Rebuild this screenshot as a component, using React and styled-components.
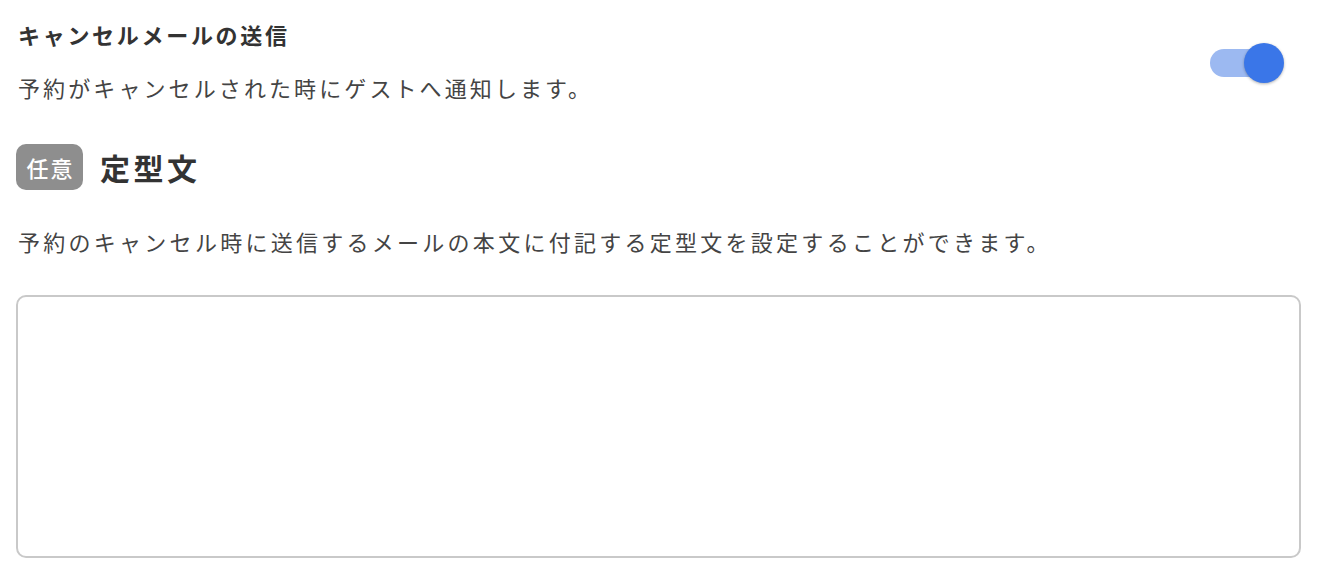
import React from "react";
import styled, { createGlobalStyle } from "styled-components";

const Global = createGlobalStyle`
  html, body { margin: 0; padding: 0; background: #fff; }
  body { font-family: "Noto Sans CJK JP", "Noto Sans", sans-serif; color: #333; }
  * { box-sizing: border-box; }
`;

const Page = styled.div`
  padding: 18px 23px 0 16px;
  display: flex;
  flex-direction: column;
`;

const HeaderRow = styled.div`
  display: flex;
  justify-content: space-between;
  align-items: center;
  padding-left: 2px;
`;

const HeaderText = styled.div`
  display: flex;
  flex-direction: column;
  gap: 19px;
`;

const Title = styled.div`
  font-size: 22px;
  font-weight: 700;
  letter-spacing: 2.7px;
  line-height: 32px;
  color: #333;
`;

const Desc = styled.div`
  font-size: 22px;
  letter-spacing: 3.1px;
  line-height: 36px;
  color: #444;
`;

const Toggle = styled.div`
  position: relative;
  width: 74px;
  height: 40px;
  margin-right: 17px;
  margin-top: 2px;
`;

const Track = styled.div`
  position: absolute;
  left: 0;
  top: 6px;
  width: 56px;
  height: 28px;
  border-radius: 14px;
  background: #9cb9f1;
`;

const Knob = styled.div`
  position: absolute;
  right: 0;
  top: 0;
  width: 40px;
  height: 40px;
  border-radius: 50%;
  background: #3a76e8;
  box-shadow: 0 1px 3px rgba(0, 0, 0, 0.3);
`;

const SectionHead = styled.div`
  display: flex;
  align-items: center;
  gap: 17px;
  margin-top: 39px;
`;

const Badge = styled.span`
  display: inline-flex;
  align-items: center;
  justify-content: center;
  width: 67px;
  height: 46px;
  border-radius: 10px;
  background: #8e8e8e;
  color: #fff;
  font-size: 22px;
  font-weight: 500;
  letter-spacing: 2px;
  padding-left: 2px;
`;

const Heading = styled.h2`
  margin: 0;
  font-size: 30px;
  font-weight: 700;
  letter-spacing: 3.5px;
  color: #333;
`;

const Desc2 = styled(Desc)`
  margin-top: 33px;
  padding-left: 2px;
  letter-spacing: 3.27px;
`;

const TextArea = styled.textarea`
  margin-top: 36px;
  width: 100%;
  height: 263px;
  border: 2px solid #c9c9c9;
  border-radius: 10px;
  resize: none;
  outline: none;
  font-family: inherit;
  font-size: 20px;
  padding: 12px;
`;

export default function App() {
  return (
    <>
      <Global />
      <Page>
        <HeaderRow>
          <HeaderText>
            <Title>キャンセルメールの送信</Title>
            <Desc>予約がキャンセルされた時にゲストへ通知します。</Desc>
          </HeaderText>
          <Toggle>
            <Track />
            <Knob />
          </Toggle>
        </HeaderRow>
        <SectionHead>
          <Badge>任意</Badge>
          <Heading>定型文</Heading>
        </SectionHead>
        <Desc2>
          予約のキャンセル時に送信するメールの本文に付記する定型文を設定することができます。
        </Desc2>
        <TextArea />
      </Page>
    </>
  );
}
